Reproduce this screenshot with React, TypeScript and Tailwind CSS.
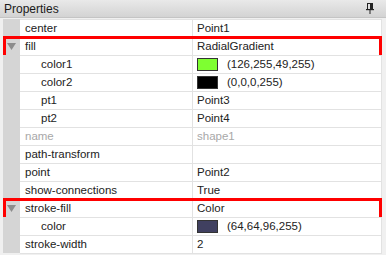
import React from 'react';

type Row = {
  name: string;
  value?: string;
  swatch?: string;
  indent?: boolean;
  expanded?: boolean;
  muted?: boolean;
  highlight?: boolean;
};

const rows: Row[] = [
  { name: 'center', value: 'Point1' },
  { name: 'fill', value: 'RadialGradient', expanded: true, highlight: true },
  { name: 'color1', value: '(126,255,49,255)', swatch: '#7eff31', indent: true },
  { name: 'color2', value: '(0,0,0,255)', swatch: '#000000', indent: true },
  { name: 'pt1', value: 'Point3', indent: true },
  { name: 'pt2', value: 'Point4', indent: true },
  { name: 'name', value: 'shape1', muted: true },
  { name: 'path-transform', value: '' },
  { name: 'point', value: 'Point2' },
  { name: 'show-connections', value: 'True' },
  { name: 'stroke-fill', value: 'Color', expanded: true, highlight: true },
  { name: 'color', value: '(64,64,96,255)', swatch: '#404060', indent: true },
  { name: 'stroke-width', value: '2' },
];

const PinIcon = () => (
  <svg width="8" height="11" viewBox="0 0 8 11" className="text-[#222]">
    <rect x="1.5" y="0.5" width="5" height="6" fill="none" stroke="currentColor" strokeWidth="1" />
    <rect x="4" y="1" width="2" height="5" fill="currentColor" />
    <rect x="0" y="6" width="8" height="1.2" fill="currentColor" />
    <rect x="3.5" y="7" width="1" height="4" fill="currentColor" />
  </svg>
);

const App: React.FC = () => {
  return (
    <div
      className="w-[386px] h-[255px] bg-[#f0f0f0] overflow-hidden text-[11.5px] text-[#222]"
      style={{ fontFamily: '"Liberation Sans", Arial, sans-serif' }}
    >
      {/* Header */}
      <div className="h-[18px] flex items-center justify-between pl-[4px] pr-[12px] bg-gradient-to-b from-[#e9e9e9] to-[#d3d3d3] border-b border-[#c4c4c4]">
        <span className="text-[12px] text-[#1a1a1a]">Properties</span>
        <PinIcon />
      </div>

      {/* Table */}
      <div className="mt-[1px] flex flex-col w-[382px] pl-[3px]">
        {rows.map((row) => (
          <div key={row.name} className="relative flex h-[18px]">
            <div className="w-[17px] bg-[#d5d5d5] flex items-center justify-center">
              {row.expanded && (
                <svg width="9" height="7" viewBox="0 0 9 7">
                  <polygon points="0,0 9,0 4.5,7" fill="#8c8c8c" />
                </svg>
              )}
            </div>
            <div className="flex flex-1 bg-white border-t border-[#e2e2e2] border-r">
              <div
                className={`w-[173px] flex items-center border-r border-[#e2e2e2] ${
                  row.indent ? 'pl-[21px]' : 'pl-[5px]'
                } ${row.muted ? 'text-[#a8a8a8]' : ''}`}
              >
                {row.name}
              </div>
              <div className={`flex-1 flex items-center pl-[4px] ${row.muted ? 'text-[#a8a8a8]' : ''}`}>
                {row.swatch && (
                  <span
                    className="w-[21px] h-[13px] border border-[#333] mr-[9px]"
                    style={{ backgroundColor: row.swatch }}
                  />
                )}
                {row.value}
              </div>
            </div>
            {row.highlight && (
              <div className="absolute -top-[1px] -bottom-[3px] left-0 right-0 border-[3px] border-[#ff0000] pointer-events-none" />
            )}
          </div>
        ))}
        <div className="h-px bg-[#e2e2e2] ml-[17px]" />
      </div>
    </div>
  );
};

export default App;
